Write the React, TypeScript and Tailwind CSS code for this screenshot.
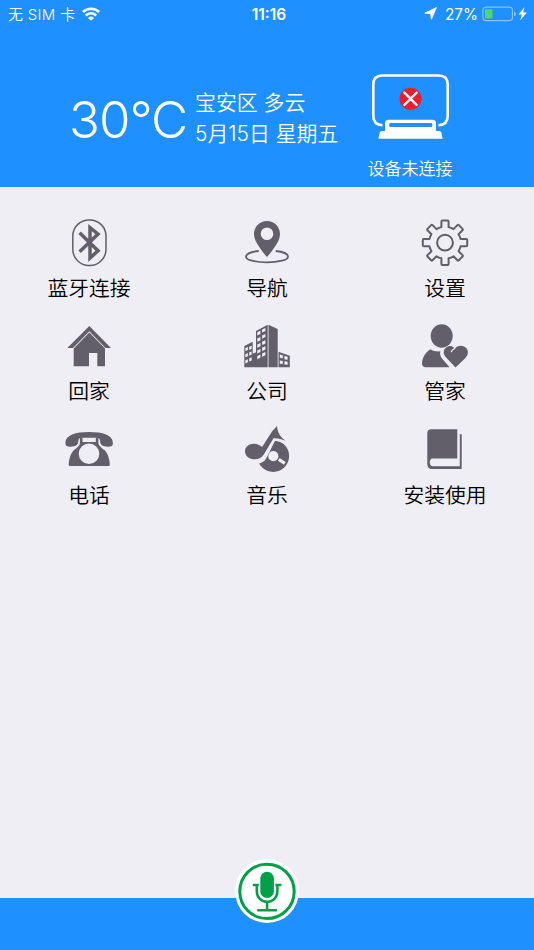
import type { ReactNode } from "react";

const INK = "#625f6b";
const PAPER = "#efeef4";

// one gear tooth per 45 degrees, flat sides
function gearPath(cx: number, cy: number): string {
  const pts: string[] = [];
  for (let k = 0; k < 8; k++) {
    const a = (k * Math.PI) / 4;
    const at = (r: number, w: number) =>
      `${(cx + r * Math.sin(a) + w * Math.cos(a)).toFixed(2)} ${(cy - r * Math.cos(a) + w * Math.sin(a)).toFixed(2)}`;
    pts.push(`${k === 0 ? "M" : "A16 16 0 0 1 "}${at(15.6, -3.6)}`);
    pts.push(`L${at(21.2, -3.6)} Q${at(22.2, -3.6)} ${at(22.2, -2.6)} L${at(22.2, 2.6)} Q${at(22.2, 3.6)} ${at(21.2, 3.6)} L${at(15.6, 3.6)}`);
  }
  const first = `${(cx - 3.6).toFixed(2)} ${(cy - 15.6).toFixed(2)}`;
  return pts.join(" ") + ` A16 16 0 0 1 ${first} Z`;
}

function Icon({ children }: { children: ReactNode }) {
  return (
    <svg viewBox="0 0 48 48" className="h-12 w-12 overflow-visible" fill={INK}>
      {children}
    </svg>
  );
}

const bluetooth = (
  <Icon>
    <rect x="7.8" y="0.9" width="33.2" height="45.6" rx="16.2" fill="none" stroke={INK} strokeWidth="1.5" />
    <path d="M14.6 13.8 33 31.8 25 39V8.6L33 15 14.6 32.8" fill="none" stroke={INK} strokeWidth="3.5" />
  </Icon>
);

const pin = (
  <Icon>
    <path fillRule="evenodd" d="M24 2C16.7 2 11 7.7 11 15c0 6.2 4.8 12.4 8.2 17.2C21 34.6 23.2 36.8 24 38.3c.8-1.5 3-3.7 4.8-6.1C32.2 27.4 37 21.2 37 15 37 7.7 31.3 2 24 2Zm0 6.4a6.3 6.3 0 1 1 0 12.6 6.3 6.3 0 0 1 0-12.6Z" />
    <path d="M15.7 32C8 32.7 3 35.1 3 37.7c0 3.2 9.4 5.6 21 5.6s21-2.4 21-5.6c0-2.6-5-5-12.300-5.700" fill="none" stroke={INK} strokeWidth="1.8" />
  </Icon>
);

const gear = (
  <Icon>
    <path d={gearPath(24, 23.7)} fill="none" stroke={INK} strokeWidth="2" strokeLinejoin="round" />
    <circle cx="24" cy="23.7" r="7.9" fill="none" stroke={INK} strokeWidth="2" />
  </Icon>
);

const home = (
  <Icon>
    <path d="M24.3 3 46 25H40.5L24.3 8.2 8 25H2.3Z" />
    <path d="M24.3 9.6 40 25.6V43.3H32.3V30H24V43.3H8.7V25.6Z" />
  </Icon>
);

const midRows = [[10.3, 7], [16.6, 13], [22.5, 19.3], [28.4, 25.3], [34, 31.2]];
const leftRows = [[26, 24.8], [32.2, 30.6], [38.3, 36.4]];

const buildings = (
  <Icon>
    <path d="M1.3 23 9.7 18.7V30.5L13 29.5V8L24.7 1.7V44.3H1.3Z" />
    <path d="M25.5 1.7 34.7 6V44.3H25.5Z" />
    <path d="M35.5 28.7 46.8 32.7V44.3H35.5Z" />
    <g fill={PAPER}>
      {midRows.map(([a, b]) => (
        <g key={a}>
          <path d={`M14.3 ${a - 1}l3.1-1.5v3.2l-3.1 1.5Z`} />
          <path d={`M19.1 ${b - 0.6}l3.3-1.5v3.2l-3.3 1.5Z`} />
        </g>
      ))}
      {leftRows.map(([a, b]) => (
        <g key={a}>
          <path d={`M2.4 ${a - 1}l2.5-1.1v3.1l-2.5 1.1Z`} />
          <path d={`M6.2 ${b - 1}l2.5-1.1v3.1l-2.5 1.1Z`} />
        </g>
      ))}
      <path d="M36.8 31.5l3 .8v3l-3-.6ZM41.4 32.9l3.2.9v3l-3.2-.6ZM36.8 37.5l3 .5v3l-3-.3ZM41.4 38.2l3.2.5v3l-3.2-.3Z" />
    </g>
  </Icon>
);

const butler = (
  <Icon>
    <ellipse cx="20.7" cy="13" rx="11" ry="11.7" />
    <path d="M9.2 26.2C4 29.7 1 35.5 1 40.5c0 2.6 1.6 3.7 4 3.7H28.600L21 35.5c-1.7-2.2-2.3-4.5-1.6-7.2-3.8.4-7.3-.4-10.2-2.1Z" />
    <path d="M34.5 44.5 24.2 33.6c-5-6.6 3.7-14 9-8.7l.7.7c4.5-6.2 15.7-1.8 12.5 6.4-.5 1.2-1.3 2.1-2 2.9Z" />
    <path d="M33.9 25.2c-1.900.9-3.100 2-3.600 3.600" fill="none" stroke={PAPER} strokeWidth="1.2" strokeLinecap="round" />
  </Icon>
);

const phone = (
  <Icon>
    <path d="M.4 16.7C.6 9 10.5 6 24.2 6S47.6 9 47.9 16.7c.1 3.3-1.6 4-5.2 4-4.4 0-7.300-1.300-7.500-4.600-.1-2.500-.7-4.200-2.700-4.400H15.900c-2 .2-2.600 1.900-2.700 4.400-.2 3.300-3.100 4.600-7.500 4.600-3.700 0-5.400-.7-5.300-4Z" />
    <path fillRule="evenodd" d="M14.9 11.600h2.600v4.400H30.800v-4.400h2.600v5.100c0 3.200 3.300 4.900 6 7.400 2.700 2.500 5 7.600 5.400 13.900.1 1.400-.4 2-1.600 2H5.300c-1.200 0-1.700-.6-1.600-2 .4-6.300 2.700-11.400 5.400-13.900 2.700-2.500 5.800-4.200 5.800-7.400ZM24 17.500a10.300 10.300 0 1 0 0 20.600 10.300 10.300 0 0 0 0-20.600Z" />
  </Icon>
);

const music = (
  <Icon>
    <circle cx="30.2" cy="30" r="15.9" />
    <path d="M6 5H31L45 17 41.5 18.2C37 15.6 33.2 14.8 31.8 15.2L23.3 32.2C21.6 35.4 18.7 37.3 14 37.6L6 35Z" fill={PAPER} />
    <circle cx="30.3" cy="30.2" r="5.1" fill={PAPER} />
    <path d="m35.8 33.3 6 4" stroke={PAPER} strokeWidth="3.2" />
    <path d="M34 0c.7 6.700 2.700 10.500 8.600 14.800-4.500-2-8.500-2.800-12.100-2.500L20.800 28.500c-2 3.400-5.700 5.200-10 4.800C5.700 32.800 2 29.800 2 25.300c0-4.400 3.800-7.600 8.500-7.600 3.600 0 6.300 1.300 8.600 3.400L29 5.600Z" />
  </Icon>
);

const book = (
  <Icon>
    <path d="M10.3 3.3H36.3V32.5H11.5c-3.6 0-3.6 7.7 0 7.7H38.8V8.3h1.9V43H11c-3 0-4.7-2-4.7-5V7.3c0-2.7 1.3-4 4-4Z" />
  </Icon>
);

const items: { label: string; icon: ReactNode }[] = [
  { label: "蓝牙连接", icon: bluetooth },
  { label: "导航", icon: pin },
  { label: "设置", icon: gear },
  { label: "回家", icon: home },
  { label: "公司", icon: buildings },
  { label: "管家", icon: butler },
  { label: "电话", icon: phone },
  { label: "音乐", icon: music },
  { label: "安装使用", icon: book },
];

function StatusBar() {
  return (
    <div className="grid h-7 grid-cols-3 items-center text-[15px] leading-none">
      <div className="flex items-center pl-2">
        <span className="whitespace-pre font-[350] tracking-[0.3px]">无 SIM 卡</span>
        <svg viewBox="0 0 18 14" className="ml-[7px] h-3.5 w-[18px]" fill="none" stroke="#fff" strokeWidth="2.6">
          <path d="M.9 5a11.8 11.8 0 0 1 16.2 0M3.8 8.5a7.3 7.3 0 0 1 10.4 0" />
          <path d="M9 13.7 6 10.9a4.3 4.3 0 0 1 6 0Z" fill="#fff" stroke="none" />
        </svg>
      </div>
      <span className="pl-1 pt-px text-center text-[15.5px] font-semibold">11:16</span>
      <div className="flex items-center justify-end pr-1.5">
        <svg viewBox="0 0 13 13" className="mr-2 h-[13px] w-[13px]" fill="#fff" stroke="#fff" strokeWidth=".8" strokeLinejoin="round">
          <path d="M12.5.5 7.4 12.3 6.6 6.6.7 6.2Z" />
        </svg>
        <span className="mr-1 pt-px text-[15.3px]">27%</span>
        <svg viewBox="0 0 46 16" className="h-4 w-[46px]">
          <rect x=".9" y="1.2" width="29.6" height="13.4" rx="3.3" fill="none" stroke="#86c0ff" strokeWidth="1.2" />
          <rect x="3" y="3.2" width="7.5" height="9.4" rx=".8" fill="#4cd964" />
          <path d="M32 5.5q2 .7 2 2.4t-2 2.4Z" fill="#86c0ff" />
          <path d="m42.5 1-6 7.5h3.3l-1.6 6 6.6-8h-3.6Z" fill="#fff" />
        </svg>
      </div>
    </div>
  );
}

function DeviceStatus() {
  return (
    <div className="flex w-[110px] flex-col items-center">
      <svg viewBox="0 0 79 67" className="h-[67px] w-[79px]">
        <path d="M11.5 52.2C5.5 51.9 2.3 49 2.3 43V11.5q0-9 9-9H67.7q9 0 9 9V43c0 6-3.1 8.9-9.2 9.2" fill="none" stroke="#fff" strokeWidth="2.6" />
        <path fillRule="evenodd" fill="#fff" d="M17.5 46.7H61.5q3.5 0 3.5 3.5V58h3.3q1.7 0 2.1 1.8l1.3 5.9H7.4l1.3-5.9Q9.1 58 10.8 58H14V50.2q0-3.5 3.5-3.5ZM19.5 50q-1.3 0-1.3 1.3v1.5q0 1.3 1.3 1.3H60q1.3 0 1.3-1.3v-1.5Q61.3 50 60 50Z" />
        <circle cx="39.5" cy="25.7" r="11" fill="#e91f2c" />
        <path d="m33.4 19.7 12.2 12.2m0-12.2L33.4 31.9" stroke="#fff" strokeWidth="2.4" strokeLinecap="round" />
      </svg>
      <p className="mt-[19px] text-[17px] font-[350] leading-5">设备未连接</p>
    </div>
  );
}

export default function App() {
  return (
    <div className="flex h-[950px] w-[534px] flex-col overflow-hidden bg-[#efeef4] font-[Inter,'Noto_Sans_CJK_SC',sans-serif] font-normal">
      <header className="h-[187px] shrink-0 bg-[#1f90ff] text-white">
        <StatusBar />
        <div className="flex items-start pl-[69px] pt-[45px]">
          <div className="mt-[19px] w-[126px] whitespace-nowrap text-[51px] font-[350] leading-[56px] tracking-[-1px]">30°C</div>
          <div className="mt-[14px] w-[160px] whitespace-nowrap text-[20.9px] font-[350] leading-[31px]">
            <p>宝安区 多云</p>
            <p>5月15日 星期五</p>
          </div>
          <DeviceStatus />
        </div>
      </header>

      <main className="grid grid-cols-3 pt-8">
        {items.map(({ label, icon }) => (
          <button key={label} className="flex h-[103.5px] flex-col items-center">
            {icon}
            <span className="mt-[5.5px] text-[20.8px] font-[350] leading-8 text-black">{label}</span>
          </button>
        ))}
      </main>

      <footer className="mt-auto flex h-[52px] shrink-0 justify-center bg-[#1f90ff]">
        <button className="-mt-[39px] h-16 w-16 rounded-full bg-white">
          <svg viewBox="0 0 64 64" className="h-16 w-16" fill="none" stroke="#00a04a">
            <circle cx="32" cy="32.4" r="27.2" strokeWidth="3" />
            <rect x="25.3" y="12.7" width="13.6" height="26.3" rx="6.8" fill="#00a04a" stroke="none" />
            <path d="M17.8 26h6M40.4 26h6M21.8 26v6.500a10.300 10.300 0 0 0 20.600 0V26M32.100 43v7.500M22.300 51.300h19.600" strokeWidth="2.5" />
          </svg>
        </button>
      </footer>
    </div>
  );
}
